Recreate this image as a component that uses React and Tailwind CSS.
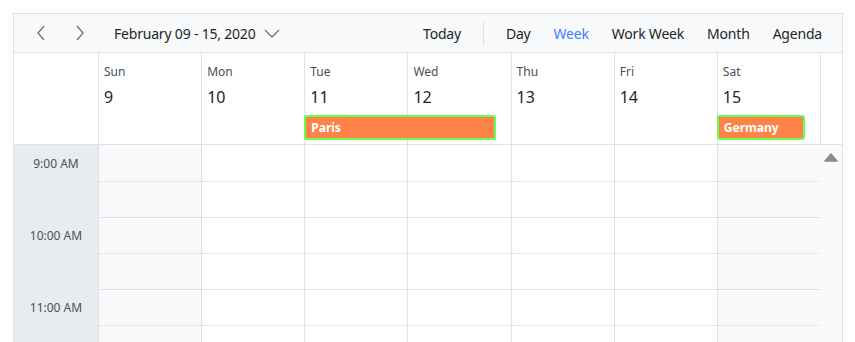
const days = [
  { name: "Sun", date: 9, weekend: true },
  { name: "Mon", date: 10 },
  { name: "Tue", date: 11 },
  { name: "Wed", date: 12 },
  { name: "Thu", date: 13 },
  { name: "Fri", date: 14 },
  { name: "Sat", date: 15, weekend: true },
];

const colStart = [
  "col-start-2",
  "col-start-3",
  "col-start-4",
  "col-start-5",
  "col-start-6",
  "col-start-7",
  "col-start-8",
];

const hours = ["9:00 AM", "10:00 AM", "11:00 AM"];

const Chevron = ({ dir }) => (
  <svg width="10" height="16" viewBox="0 0 10 16" fill="none" stroke="#6c757d" strokeWidth="1.3">
    {dir === "left" ? <path d="M8 1 L2 8 L8 15" /> : <path d="M2 1 L8 8 L2 15" />}
  </svg>
);

const Toolbar = () => (
  <div className="h-[39px] flex items-center bg-[#f8f9fa] border-b border-[#dee2e6] text-[14px] text-[#212529]">
    <div className="flex items-center pl-[9px]">
      <button className="w-[36px] flex justify-center">
        <Chevron dir="left" />
      </button>
      <button className="w-[36px] ml-[3px] flex justify-center">
        <Chevron dir="right" />
      </button>
      <button className="ml-[16px] flex items-center gap-[9px] tracking-[-0.2px]">
        <span>February 09 - 15, 2020</span>
        <svg width="16" height="9" viewBox="0 0 16 9" fill="none" stroke="#6c757d" strokeWidth="1.3">
          <path d="M1 1 L8 8 L15 1" />
        </svg>
      </button>
    </div>
    <div className="ml-auto flex items-center pr-[20px] tracking-[-0.2px]">
      <button>Today</button>
      <div className="w-px h-[24px] bg-[#dee2e6] mx-[22px]" />
      <div className="flex items-center gap-[23px]">
        <button>Day</button>
        <button className="text-[#3f7dff]">Week</button>
        <button>Work Week</button>
        <button>Month</button>
        <button>Agenda</button>
      </div>
    </div>
  </div>
);

const Header = () => (
  <div className="grid grid-cols-[84px_repeat(7,1fr)_22px] grid-rows-[62px_29px] border-b border-[#dee2e6]">
    <div className="col-start-1 row-start-1 row-span-2" />
    {days.map((d, i) => (
      <div
        key={d.name}
        className={`${colStart[i]} row-start-1 row-span-2 border-l border-[#dee2e6] pl-[5px] pt-[11px]`}
      >
        <div className="text-[12px] leading-[16px] text-[#495057]">{d.name}</div>
        <div className="text-[16px] leading-[22px] mt-[6px] text-[#212529]">{d.date}</div>
      </div>
    ))}
    <div className="col-start-9 row-start-1 row-span-2 border-l border-[#dee2e6]" />
    <div className="col-start-4 col-span-2 row-start-2 h-[25px] mr-[15px] bg-[#ff8349] border-2 border-[#66ff4d] rounded-[3px] text-white font-bold text-[12px] leading-[21px] pl-[5px] z-10">
      Paris
    </div>
    <div className="col-start-8 row-start-2 h-[25px] mr-[15px] bg-[#ff8349] border-2 border-[#66ff4d] rounded-[3px] text-white font-bold text-[12px] leading-[21px] pl-[5px] z-10">
      Germany
    </div>
  </div>
);

const Body = () => (
  <div className="grid grid-cols-[84px_repeat(7,1fr)_22px]">
    <div className="bg-[#e9ecef]">
      {hours.map((h) => (
        <div key={h} className="h-[72px] pt-[10px] text-center text-[12px] text-[#495057]">
          {h}
        </div>
      ))}
    </div>
    {days.map((d) => (
      <div key={d.name} className={`border-l border-[#dee2e6] ${d.weekend ? "bg-[#f8f9fa]" : "bg-white"}`}>
        {hours.map((h, i) => (
          <div key={h} className={`h-[72px] flex flex-col ${i > 0 ? "border-t border-[#dee2e6]" : ""}`}>
            <div className="flex-1 border-b border-dotted border-[#d6d9dc]" />
            <div className="flex-1" />
          </div>
        ))}
      </div>
    ))}
    <div className="bg-[#fafafa] flex justify-center pt-[8px]">
      <svg width="14" height="9" viewBox="0 0 14 9">
        <path d="M7 1 L13 8 L1 8 Z" fill="#8a8a8a" stroke="#8a8a8a" strokeWidth="1.5" strokeLinejoin="round" />
      </svg>
    </div>
  </div>
);

export default function App() {
  return (
    <div
      className="h-[342px] overflow-hidden bg-white pt-[13px] pl-[13px]"
      style={{ fontFamily: '"Noto Sans", "Open Sans", sans-serif' }}
    >
      <div className="w-[830px] border border-[#dee2e6]">
        <Toolbar />
        <Header />
        <Body />
      </div>
    </div>
  );
}
